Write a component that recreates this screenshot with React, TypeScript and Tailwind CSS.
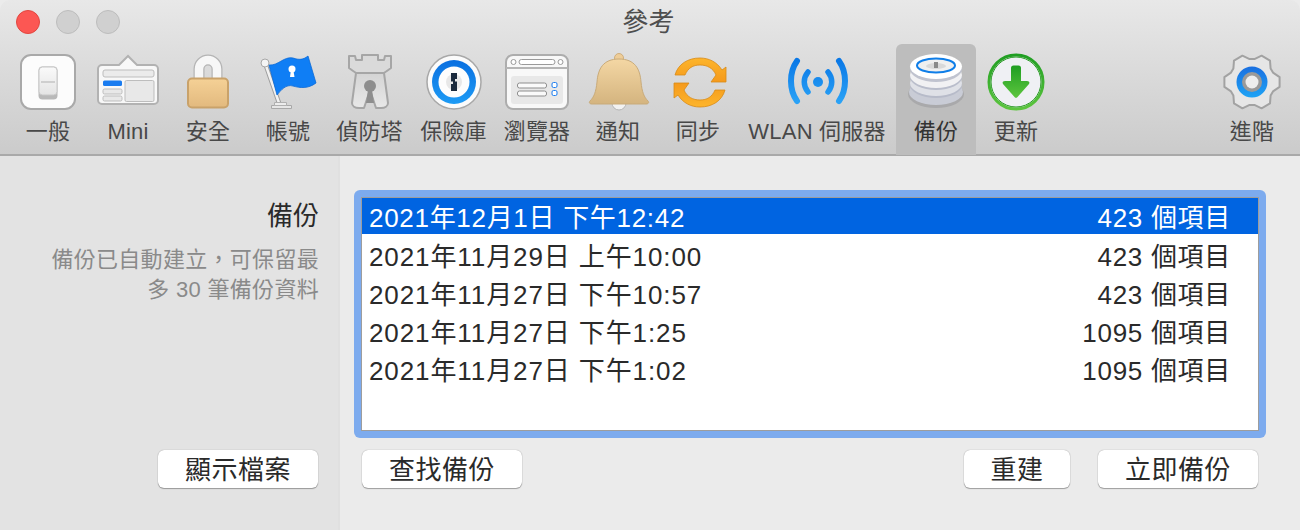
const font = 'font-["Liberation_Sans","Noto_Sans_CJK_TC",sans-serif]';

function GeneralIcon() {
  return (
    <svg width="64" height="60" viewBox="0 0 64 60">
      <defs>
        <linearGradient id="sw" x1="0" y1="0" x2="0" y2="1">
          <stop offset="0" stopColor="#fafafa" />
          <stop offset="1" stopColor="#e4e4e4" />
        </linearGradient>
      </defs>
      <rect x="5" y="3" width="54" height="54" rx="10" fill="#fcfcfc" stroke="#a9a9a9" strokeWidth="2" />
      <rect x="22.5" y="14.5" width="19" height="33" rx="4" fill="#b9b9b9" />
      <rect x="23" y="15" width="18" height="28" rx="3.5" fill="url(#sw)" stroke="#c8c8c8" />
      <path d="M25 30h14" stroke="#c4c4c4" strokeWidth="1.5" />
    </svg>
  );
}

function MiniIcon() {
  return (
    <svg width="64" height="60" viewBox="0 0 64 60">
      <path d="M6 13h17l9-9 9 9h17a4 4 0 0 1 4 4v31a4 4 0 0 1-4 4H6a4 4 0 0 1-4-4V17a4 4 0 0 1 4-4z" fill="#f8f8f8" stroke="#b2b2b2" strokeWidth="2" />
      <rect x="7" y="18" width="51" height="7" rx="2" fill="#ebebeb" stroke="#bdbdbd" />
      <rect x="7" y="28.5" width="19" height="5.5" rx="1.5" fill="#1a7cf0" />
      <rect x="7" y="37" width="19" height="5" rx="1.5" fill="#e8e8e8" stroke="#bdbdbd" />
      <rect x="7" y="44" width="19" height="5" rx="1.5" fill="#e8e8e8" stroke="#bdbdbd" />
      <rect x="29" y="28.5" width="29" height="21" rx="1.5" fill="#e8e8e8" stroke="#bdbdbd" />
    </svg>
  );
}

function LockIcon() {
  return (
    <svg width="64" height="60" viewBox="0 0 64 60">
      <defs>
        <linearGradient id="lk" x1="0" y1="0" x2="0" y2="1">
          <stop offset="0" stopColor="#f5d196" />
          <stop offset="1" stopColor="#e2b97e" />
        </linearGradient>
      </defs>
      <path d="M23 28V17a9 9 0 0 1 18 0v11" fill="none" stroke="#b4b4b4" strokeWidth="11" />
      <path d="M23 28V17a9 9 0 0 1 18 0v11" fill="none" stroke="#f7f7f7" strokeWidth="8.5" />
      <rect x="12" y="26.5" width="40" height="29" rx="4" fill="url(#lk)" stroke="#c9a26a" strokeWidth="2" />
    </svg>
  );
}

function FlagIcon() {
  return (
    <svg width="64" height="60" viewBox="0 0 64 60">
      <path d="M9 11l14 40" stroke="#9d9d9d" strokeWidth="4.5" strokeLinecap="round" />
      <path d="M9 11l14 40" stroke="#f2f2f2" strokeWidth="2.5" strokeLinecap="round" />
      <circle cx="9" cy="11" r="4" fill="#f4f4f4" stroke="#a8a8a8" />
      <path d="M15.500 53.500h20v3h-20z" fill="#e6e6e6" stroke="#a8a8a8" />
      <path d="M18.500 50.500h12v3h-12z" fill="#ececec" stroke="#b0b0b0" />
      <path d="M13 13C22 14 28 4 37 6C43 8 47 8 52 4L60 31C52 37 44 36 37 34C30 32 25 38 21 43Z" fill="#0f7ef5" stroke="#0a69d8" strokeWidth="0.8" strokeLinejoin="round" />
      <circle cx="36" cy="17" r="3.500" fill="#fff" />
      <path d="M34.800 19l-0.800 6h4.500l-1-6z" fill="#fff" />
    </svg>
  );
}

function TowerIcon() {
  return (
    <svg width="64" height="60" viewBox="0 0 64 60">
      <defs>
        <linearGradient id="tw" x1="0" y1="0" x2="0" y2="1">
          <stop offset="0" stopColor="#d4d4d4" />
          <stop offset="1" stopColor="#e8e8e8" />
        </linearGradient>
      </defs>
      <path d="M11 4h6l1 4h6v-5h16v5h6l1-4h6v12c-4 3-7 5-9 6H20c-2-1-5-3-9-6z" fill="#dadada" stroke="#a6a6a6" strokeWidth="2" strokeLinejoin="round" />
      <path d="M18 21h28l4 30c0 3-3 5-7 5h-5l-6-18-6 18h-5c-4 0-7-2-7-5z" fill="url(#tw)" stroke="#a6a6a6" strokeWidth="2" strokeLinejoin="round" />
      <circle cx="32" cy="34" r="6" fill="#8e8e8e" />
      <path d="M30 38l-2 13h8l-2-13z" fill="#8e8e8e" />
    </svg>
  );
}

function VaultIcon() {
  return (
    <svg width="64" height="60" viewBox="0 0 64 60">
      <defs>
        <linearGradient id="va" x1="0" y1="0" x2="0" y2="1">
          <stop offset="0" stopColor="#0a6fe0" />
          <stop offset="1" stopColor="#1d9bf5" />
        </linearGradient>
      </defs>
      <circle cx="32" cy="30" r="27" fill="#fbfbfb" stroke="#a8a8a8" strokeWidth="1.500" />
      <circle cx="32" cy="30" r="22" fill="url(#va)" />
      <circle cx="32" cy="30" r="15.500" fill="#fdfdfd" />
      <circle cx="32" cy="30" r="8" fill="#e8e8e8" />
      <path d="M29 21h6v6h-2v2.500h2V39h-6v-7h2v-2.500h-2z" fill="#1b2a3d" />
    </svg>
  );
}

function BrowserIcon() {
  return (
    <svg width="64" height="60" viewBox="0 0 64 60">
      <rect x="1" y="3" width="62" height="54" rx="7" fill="#f8f8f8" stroke="#adadad" strokeWidth="2" />
      <path d="M1 16h62" stroke="#b5b5b5" strokeWidth="2" />
      <circle cx="8.500" cy="10" r="2.500" fill="#fff" stroke="#9a9a9a" />
      <circle cx="55.500" cy="10" r="2.500" fill="#fff" stroke="#9a9a9a" />
      <rect x="14" y="7.500" width="36" height="5" rx="2.500" fill="#fff" stroke="#9a9a9a" />
      <rect x="6" y="24" width="52" height="28" rx="3" fill="#e8e8e8" />
      <rect x="12.500" y="31" width="29" height="5" rx="2" fill="#fafafa" stroke="#8e8e8e" />
      <rect x="12.500" y="39" width="29" height="5" rx="2" fill="#fafafa" stroke="#8e8e8e" />
      <rect x="47" y="30.500" width="5" height="5" rx="1.500" fill="#fff" stroke="#1a7cf0" />
      <rect x="47" y="38.500" width="5" height="5" rx="1.500" fill="#fff" stroke="#1a7cf0" />
    </svg>
  );
}

function BellIcon() {
  return (
    <svg width="64" height="60" viewBox="-1 0 64 60">
      <defs>
        <linearGradient id="bl" x1="0" y1="0" x2="0" y2="1">
          <stop offset="0" stopColor="#f4d7a4" />
          <stop offset="1" stopColor="#d4b47f" />
        </linearGradient>
      </defs>
      <path d="M25 51a7 7 0 0 0 14 0z" fill="#f2f2f2" stroke="#b5b5b5" />
      <circle cx="32" cy="6" r="4.500" fill="#eecd98" stroke="#cfae7c" />
      <path d="M32 7C16 7 11 17 10 30C9 40 7 45 3 49C2 50 2 52 5 52H59C62 52 62 50 61 49C57 45 55 40 54 30C53 17 48 7 32 7Z" fill="url(#bl)" stroke="#c9ab7a" strokeWidth="1" />
    </svg>
  );
}

function SyncIcon() {
  const arrow = "M7 23C10 12 20 6 32 6C41 6 49 10 54 18L58 15V30H43L48 23C45 16 39 13 32 13C25 13 20 16 17 23Z";
  return (
    <svg width="64" height="60" viewBox="-2 0 64 60">
      <defs>
        <linearGradient id="sy" x1="0" y1="0" x2="0" y2="1">
          <stop offset="0" stopColor="#fdb52c" />
          <stop offset="1" stopColor="#f59a1c" />
        </linearGradient>
      </defs>
      <path d={arrow} fill="url(#sy)" stroke="#d88a16" strokeWidth="0.8" strokeLinejoin="round" />
      <path d={arrow} transform="rotate(180 32 30.500)" fill="url(#sy)" stroke="#d88a16" strokeWidth="0.8" strokeLinejoin="round" />
    </svg>
  );
}

function WifiIcon() {
  return (
    <svg width="64" height="60" viewBox="-1 0 64 60">
      <defs>
        <linearGradient id="wf" gradientUnits="userSpaceOnUse" x1="0" y1="8" x2="0" y2="50">
          <stop offset="0" stopColor="#0a78e6" />
          <stop offset="1" stopColor="#2aa2f6" />
        </linearGradient>
      </defs>
      <circle cx="32" cy="30" r="5" fill="url(#wf)" />
      <g fill="none" stroke="url(#wf)" strokeLinecap="round">
        <path d="M22 20C17 26 17 34 22 40" strokeWidth="5.500" />
        <path d="M42 20C47 26 47 34 42 40" strokeWidth="5.500" />
        <path d="M11 9C3 20 3 38 11 49" strokeWidth="6" />
        <path d="M53 9C61 20 61 38 53 49" strokeWidth="6" />
      </g>
    </svg>
  );
}

function BackupIcon() {
  return (
    <svg width="64" height="60" viewBox="0 0 64 60">
      <ellipse cx="32" cy="42" rx="28" ry="14" fill="#a9a9ab" />
      <ellipse cx="32" cy="40" rx="27" ry="13" fill="#c9ccd6" />
      <ellipse cx="32" cy="33" rx="26" ry="13" fill="#b7bbc9" />
      <ellipse cx="32" cy="31" rx="26" ry="13" fill="#dfe1e7" />
      <ellipse cx="32" cy="25" rx="26" ry="13" fill="#b9bdcb" />
      <ellipse cx="32" cy="23" rx="26" ry="13" fill="#f1f1f3" />
      <ellipse cx="32" cy="17" rx="26" ry="13" fill="#c0c3cf" />
      <ellipse cx="32" cy="14.500" rx="26" ry="12.500" fill="#fff" />
      <ellipse cx="32" cy="13.500" rx="19" ry="7" fill="#f0f0f0" stroke="#0f7ee8" strokeWidth="2" />
      <ellipse cx="32" cy="14" rx="10" ry="3" fill="#d9d9d9" />
      <rect x="30" y="10" width="4" height="6" fill="#8a8a8a" />
    </svg>
  );
}

function UpdateIcon() {
  return (
    <svg width="64" height="60" viewBox="0 0 64 60">
      <defs>
        <linearGradient id="up" x1="0" y1="0" x2="0" y2="1">
          <stop offset="0" stopColor="#1f9e22" />
          <stop offset="1" stopColor="#5cc53e" />
        </linearGradient>
      </defs>
      <circle cx="32" cy="30" r="27" fill="#eff0f4" stroke="url(#up)" strokeWidth="3" />
      <circle cx="32" cy="30" r="25" fill="none" stroke="#2a9a26" strokeWidth="1" />
      <path d="M27 16a2.500 2.500 0 0 1 2.500-2.500h5A2.500 2.500 0 0 1 37 16v13h6c2 0 3 1.500 2 3L33.500 45a2 2 0 0 1-3 0L19 32c-1-1.500 0-3 2-3h6z" fill="url(#up)" />
    </svg>
  );
}

function gearPath() {
  const pt = (r: number, deg: number) => {
    const a = (deg * Math.PI) / 180;
    return `${(32 + r * Math.cos(a)).toFixed(1)} ${(30 + r * Math.sin(a)).toFixed(1)}`;
  };
  let d = "";
  for (let i = 0; i < 6; i++) {
    const a = i * 60;
    d += `${i === 0 ? "M" : "L"}${pt(23, a - 24)}L${pt(28, a - 10)}L${pt(28, a + 10)}L${pt(23, a + 24)}`;
  }
  return d + "Z";
}

function GearIcon() {
  return (
    <svg width="64" height="60" viewBox="0 0 64 60">
      <defs>
        <linearGradient id="ge" x1="0" y1="0" x2="0" y2="1">
          <stop offset="0" stopColor="#1a6fe0" />
          <stop offset="1" stopColor="#1ea3f5" />
        </linearGradient>
      </defs>
      <path d={gearPath()} fill="#e6e6e6" stroke="#a2a2a2" strokeWidth="2" strokeLinejoin="round" />
      <circle cx="32" cy="30" r="15.500" fill="url(#ge)" />
      <circle cx="32" cy="30" r="10" fill="#9a9a9a" />
      <circle cx="32" cy="30" r="6.500" fill="#eeeeee" />
    </svg>
  );
}

function ToolItem({ label, icon, width, active }: { label: string; icon: React.ReactNode; width: string; active?: boolean }) {
  return (
    <div className={`${width} flex h-[111px] shrink-0 flex-col items-center rounded-t-md pt-2 ${active ? "bg-[#bdbdbd] text-[#333333]" : "text-[#484848]"}`}>
      <div className="h-[60px]">{icon}</div>
      <div className="whitespace-nowrap text-[22px] leading-[40px] tracking-[0.2px]">{label}</div>
    </div>
  );
}

function Btn({ label, width }: { label: string; width: string }) {
  return (
    <button className={`${width} h-[38px] rounded-md bg-white pt-px text-[26px] tracking-[0.5px] text-[#2a2a2a] shadow-[0_1px_1px_rgba(0,0,0,0.3),0_0_1px_rgba(0,0,0,0.4)]`}>
      {label}
    </button>
  );
}

const backups = [
  ["2021年12月1日 下午12:42", "423 個項目"],
  ["2021年11月29日 上午10:00", "423 個項目"],
  ["2021年11月27日 下午10:57", "423 個項目"],
  ["2021年11月27日 下午1:25", "1095 個項目"],
  ["2021年11月27日 下午1:02", "1095 個項目"],
];

export default function App() {
  return (
    <div className={`${font} flex h-[530px] w-[1300px] flex-col overflow-hidden bg-[#ebebeb]`}>
      <header className="h-[156px] shrink-0 rounded-t-[10px] border-b-2 border-[#a9a9a9] bg-gradient-to-b from-[#e8e8e8] to-[#cbcbcb]">
        <div className="relative flex h-11 items-center justify-center">
          <div className="absolute left-4 top-2.5 flex gap-4">
            <span className="size-6 rounded-full border border-[#e2463f] bg-[#fc5753]" />
            <span className="size-6 rounded-full border border-[#bdbdbd] bg-[#d0d0d0]" />
            <span className="size-6 rounded-full border border-[#bdbdbd] bg-[#d0d0d0]" />
          </div>
          <span className="pr-[3px] text-[26px] leading-none tracking-[0.3px] text-[#4e4e4e]">參考</span>
        </div>
        <nav className="flex pl-2 pr-2">
          <ToolItem width="w-20" label="一般" icon={<GeneralIcon />} />
          <ToolItem width="w-20" label="Mini" icon={<MiniIcon />} />
          <ToolItem width="w-20" label="安全" icon={<LockIcon />} />
          <ToolItem width="w-20" label="帳號" icon={<FlagIcon />} />
          <ToolItem width="w-[83px]" label="偵防塔" icon={<TowerIcon />} />
          <ToolItem width="w-[85px]" label="保險庫" icon={<VaultIcon />} />
          <ToolItem width="w-[82px]" label="瀏覽器" icon={<BrowserIcon />} />
          <ToolItem width="w-20" label="通知" icon={<BellIcon />} />
          <ToolItem width="w-20" label="同步" icon={<SyncIcon />} />
          <ToolItem width="w-[158px]" label="WLAN 伺服器" icon={<WifiIcon />} />
          <ToolItem width="w-20" label="備份" active icon={<BackupIcon />} />
          <ToolItem width="w-20" label="更新" icon={<UpdateIcon />} />
          <div className="flex-1" />
          <ToolItem width="w-20" label="進階" icon={<GearIcon />} />
        </nav>
      </header>
      <div className="flex min-h-0 flex-1">
        <aside className="flex w-[340px] shrink-0 flex-col items-end border-r-2 border-[#e0e0e0] bg-[#e3e3e3] pb-[42px] pr-[19px] pt-11">
          <h2 className="text-[26px] leading-8 text-[#2a2a2a]">備份</h2>
          <p className="mt-[13px] w-[290px] text-right text-[22px] leading-[30px] tracking-[0.3px] text-[#8a8a8a]">
            備份已自動建立{"\uFF0C"}可保留最
            <br />
            多 30 筆備份資料
          </p>
          <div className="mr-px mt-auto">
            <Btn width="w-[160px]" label="顯示檔案" />
          </div>
        </aside>
        <main className="flex min-w-0 flex-1 flex-col pb-[42px] pl-3.5 pr-[34px] pt-[34px]">
          <div className="h-[248px] rounded-md bg-[#7dabee] p-[7px]">
            <ul className="h-full border border-[#9d9d9d] bg-white text-[26px] leading-[38px] tracking-[0.7px] text-[#2a2a2a]">
              {backups.map((row, i) => (
                <li key={i} className={`flex justify-between pl-[7px] pr-[27px] ${i === 0 ? "h-[36px] bg-[#0064e1] pt-px text-white" : "h-[38px] pt-1"}`}>
                  <span className={i === 0 ? "" : "tracking-[0.9px]"}>{row[0]}</span>
                  <span>{row[1]}</span>
                </li>
              ))}
            </ul>
          </div>
          <div className="mt-auto flex px-2">
            <Btn width="w-[160px]" label="查找備份" />
            <div className="flex-1" />
            <Btn width="w-[106px]" label="重建" />
            <div className="w-7" />
            <Btn width="w-[160px]" label="立即備份" />
          </div>
        </main>
      </div>
    </div>
  );
}
